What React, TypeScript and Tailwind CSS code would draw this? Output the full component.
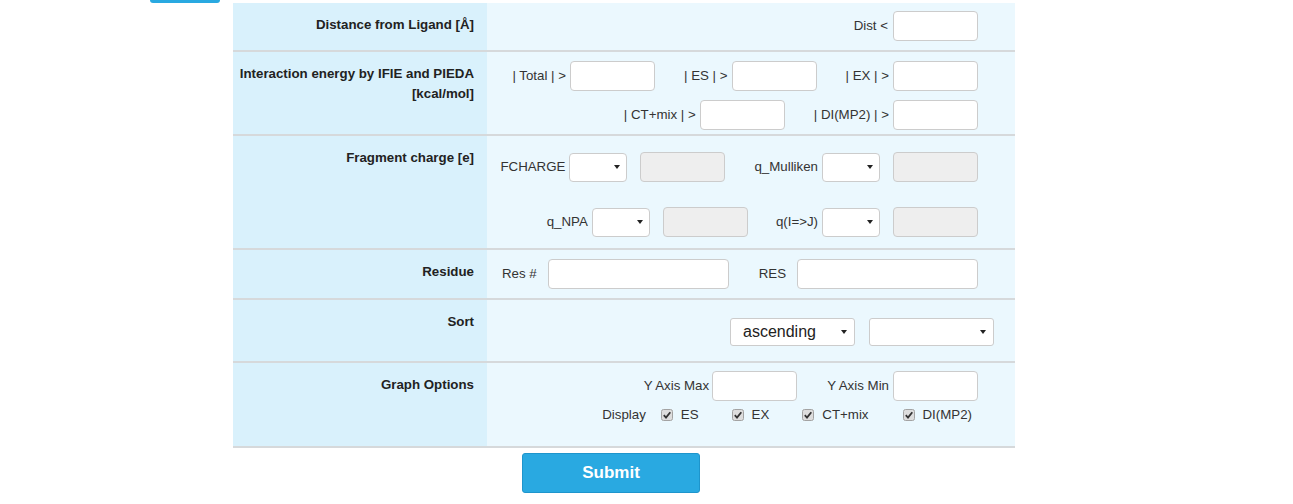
import React from 'react';

const Arrow: React.FC = () => (
  <svg width="6" height="4" viewBox="0 0 6 4" className="shrink-0">
    <path d="M0 0 H6 L3 4 Z" fill="#222" />
  </svg>
);

const TextInput: React.FC<{ w?: string }> = ({ w = 'w-[85px]' }) => (
  <input type="text" className={`${w} h-[30px] rounded-[4px] border border-[#cccccc] bg-white outline-none`} />
);

const Disabled: React.FC = () => (
  <input type="text" disabled className="w-[85px] h-[30px] rounded-[4px] border border-[#cccccc] bg-[#eeeeee]" />
);

const SmallSelect: React.FC = () => (
  <div className="w-[58px] h-[29px] rounded-[4px] border border-[#cccccc] bg-white flex items-center justify-end pr-[6px]">
    <Arrow />
  </div>
);

const SortSelect: React.FC<{ value?: string }> = ({ value }) => (
  <div className="w-[125px] h-[28px] rounded-[3px] border border-[#cccccc] bg-white flex items-center justify-between pl-[12px] pr-[7px] text-[16px] text-[#222]">
    <span>{value}</span>
    <Arrow />
  </div>
);

const Check: React.FC = () => (
  <svg width="12" height="12" viewBox="0 0 12 12" className="shrink-0">
    <rect x="0.5" y="0.5" width="11" height="11" rx="2" fill="#dddddd" stroke="#a3a3a3" />
    <path d="M2.8 6.2 L5 8.6 L9.3 3.2" fill="none" stroke="#333" strokeWidth="1.8" />
  </svg>
);

const Field: React.FC<{ label: string; children: React.ReactNode; gap?: string; className?: string }> = ({
  label,
  children,
  gap = 'gap-[4px]',
  className = '',
}) => (
  <div className={`flex items-center ${gap} ${className}`}>
    <span className="whitespace-nowrap">{label}</span>
    {children}
  </div>
);

const Row: React.FC<{ label: React.ReactNode; h: string; children: React.ReactNode }> = ({ label, h, children }) => (
  <div className={`flex ${h} border-b-2 border-[#d6d9db]`}>
    <div className="w-[254px] shrink-0 bg-[#d9f1fc] text-right pr-[13px] pt-[12px] pl-[6px] font-bold text-[13.3px] leading-[20px] text-[#222]">
      {label}
    </div>
    <div className="flex-1 bg-[#ebf8fe] text-[13.3px] text-[#333]">{children}</div>
  </div>
);

export default function App() {
  return (
    <div className="min-h-screen bg-white font-['Liberation_Sans',Arial,sans-serif]">
      <div className="h-[3px] pl-[150px]">
        <div className="h-[3px] w-[70px] bg-[#29a9e1] rounded-b-[3px]" />
      </div>

      <div className="ml-[233px] w-[782px]">
        {/* Distance */}
        <Row label="Distance from Ligand [Å]" h="h-[49px]">
          <div className="flex justify-end pr-[37px] pt-[8px]">
            <Field label="Dist <" gap="gap-[5px]">
              <TextInput />
            </Field>
          </div>
        </Row>

        {/* Interaction energy */}
        <Row
          label={
            <>
              Interaction energy by IFIE and PIEDA
              <br />
              [kcal/mol]
            </>
          }
          h="h-[84px]"
        >
          <div className="flex flex-col items-end gap-[9px] pr-[37px] pt-[9px]">
            <div className="flex items-center gap-[29px]">
              <Field label="| Total | >">
                <TextInput />
              </Field>
              <Field label="| ES | >">
                <TextInput />
              </Field>
              <Field label="| EX | >">
                <TextInput />
              </Field>
            </div>
            <div className="flex items-center gap-[29px]">
              <Field label="| CT+mix | >">
                <TextInput />
              </Field>
              <Field label="| DI(MP2) | >">
                <TextInput />
              </Field>
            </div>
          </div>
        </Row>

        {/* Fragment charge */}
        <Row label="Fragment charge [e]" h="h-[114px]">
          <div className="flex flex-col items-end gap-[25px] pr-[37px] pt-[16px]">
            <div className="flex items-center gap-[29px]">
              <div className="flex items-center gap-[13px]">
                <Field label="FCHARGE">
                  <SmallSelect />
                </Field>
                <Disabled />
              </div>
              <div className="flex items-center gap-[13px]">
                <Field label="q_Mulliken">
                  <SmallSelect />
                </Field>
                <Disabled />
              </div>
            </div>
            <div className="flex items-center gap-[28px]">
              <div className="flex items-center gap-[13px]">
                <Field label="q_NPA">
                  <SmallSelect />
                </Field>
                <Disabled />
              </div>
              <div className="flex items-center gap-[13px]">
                <Field label="q(I=>J)">
                  <SmallSelect />
                </Field>
                <Disabled />
              </div>
            </div>
          </div>
        </Row>

        {/* Residue */}
        <Row label="Residue" h="h-[50px]">
          <div className="flex justify-end items-center gap-[30px] pr-[37px] pt-[9px]">
            <Field label="Res #" gap="gap-[11px]">
              <TextInput w="w-[181px]" />
            </Field>
            <Field label="RES" gap="gap-[11px]">
              <TextInput w="w-[181px]" />
            </Field>
          </div>
        </Row>

        {/* Sort */}
        <Row label="Sort" h="h-[63px]">
          <div className="flex justify-end items-center gap-[14px] pr-[21px] pt-[18px]">
            <SortSelect value="ascending" />
            <SortSelect />
          </div>
        </Row>

        {/* Graph options */}
        <Row label="Graph Options" h="h-[85px]">
          <div className="flex flex-col items-end gap-[4px] pt-[8px]">
            <div className="flex items-center gap-[30px] pr-[37px]">
              <Field label="Y Axis Max" gap="gap-[3px]">
                <TextInput />
              </Field>
              <Field label="Y Axis Min" gap="gap-[4px]">
                <TextInput />
              </Field>
            </div>
            <div className="flex items-center h-[20px] pr-[43px]">
              <span className="mr-[15px]">Display</span>
              <div className="flex items-center gap-[8px]">
                <Check />
                <span>ES</span>
              </div>
              <div className="flex items-center gap-[8px] ml-[33px]">
                <Check />
                <span>EX</span>
              </div>
              <div className="flex items-center gap-[8px] ml-[33px]">
                <Check />
                <span>CT+mix</span>
              </div>
              <div className="flex items-center gap-[8px] ml-[34px]">
                <Check />
                <span>DI(MP2)</span>
              </div>
            </div>
          </div>
        </Row>

        <div className="pl-[289px] pt-[5px]">
          <button className="w-[178px] h-[40px] rounded-[3px] border border-[#1e95cc] bg-[#29a9e1] text-white font-bold text-[17px]">
            Submit
          </button>
        </div>
      </div>
    </div>
  );
}
